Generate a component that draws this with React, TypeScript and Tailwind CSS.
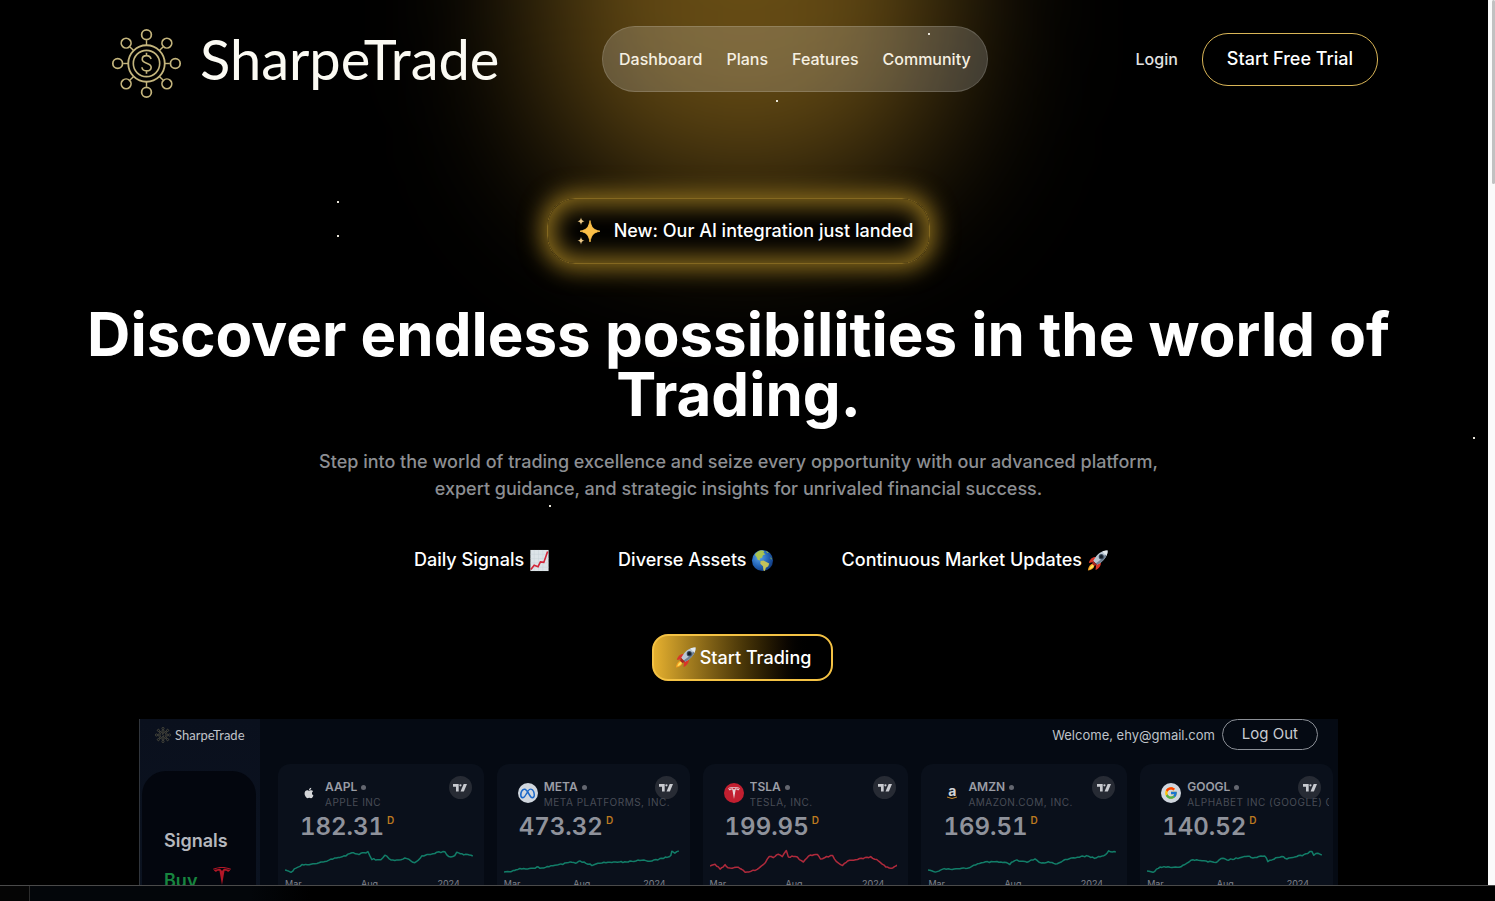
import type { ReactNode } from "react";
import { FaApple, FaMeta } from "react-icons/fa6";
import { FcGoogle } from "react-icons/fc";
import { SiTesla } from "react-icons/si";

type Point = [number, number];

interface Stock {
  ticker: string;
  company: string;
  price: string;
  icon: ReactNode;
  color: string;
  width: number;
  points: Point[];
}

function LogoMark({ className }: { className: string }) {
  const angles = [0, 45, 90, 135, 180, 225, 270, 315];
  return (
    <svg viewBox="0 0 70 70" className={className} fill="none" stroke="#c4b57d" aria-hidden="true">
      <circle cx="35" cy="35" r="18" strokeWidth="1.8" />
      <circle cx="35" cy="35" r="13" strokeWidth="1.6" />
      {angles.map((a) => (
        <g key={a} transform={`rotate(${a} 35 35)`}>
          <path d="M35 17v-5" strokeWidth="1.4" />
          <circle cx="35" cy="6.6" r="4.8" strokeWidth="1.7" />
        </g>
      ))}
      <path d="M39.500 30.500c-.6-2.200-2.200-3.300-4.400-3.300-2.500 0-4.300 1.400-4.300 3.500 0 5 8.800 2.900 8.800 8 0 2.200-1.800 3.600-4.500 3.600-2.500 0-4.300-1.300-4.600-3.600M35 24.500v2.700M35 42.300v2.700" strokeWidth="1.6" />
    </svg>
  );
}

function TradingViewMark({ className }: { className: string }) {
  return (
    <svg viewBox="0 0 16 10" className={className} fill="currentColor" aria-hidden="true">
      <path d="M0 1h6.500v8.500H3.400V4H0z" />
      <circle cx="8.500" cy="2.500" r="1.300" />
      <path d="M12.200 1H16l-3.600 8.500H8.600z" />
    </svg>
  );
}

function Rocket({ className }: { className: string }) {
  return (
    <svg viewBox="0 0 24 24" className={className} aria-hidden="true">
      <path d="M7 15.500C4 16 2.500 19 2 22.500 5.500 22 8.200 20.500 8.800 17.500z" fill="#f6a021" />
      <path d="M7.500 16.500c-2 .5-3.500 2.500-4 4.500 2.200-.5 4.200-1.500 4.700-3.500z" fill="#ffe25a" />
      <path d="M10.500 8.500C7 8 4 10.500 3 14.500l5-1zM15.500 13.500c.5 3.500-2 7-5.500 8.500l.5-5.500z" fill="#d8352a" />
      <path d="M22.500 1.500C16 1.500 11.500 5 7.500 12.500l4 4C18.500 12.500 22.500 8 22.500 1.500z" fill="#b9c6d3" />
      <path d="M22.500 1.500C22.500 8 18.500 12.500 11.500 16.500l-1.500-1.500C15.500 11.500 20 7 22.500 1.500z" fill="#6f8093" />
      <path d="M22.500 1.500c-2 0-4 .4-5.500 1.100L21.400 7c.8-1.600 1.100-3.500 1.100-5.500z" fill="#e4eaee" />
      <path d="M7.500 12.500l-1.200 2.800 2.400 2.400 2.800-1.200z" fill="#a82620" />
      <circle cx="16" cy="8" r="2.700" fill="#3a4a5c" />
      <circle cx="16" cy="8" r="1.700" fill="#141d28" />
    </svg>
  );
}

function Globe({ className }: { className: string }) {
  return (
    <svg viewBox="0 0 24 24" className={className} aria-hidden="true">
      <defs>
        <radialGradient id="sea" cx=".35" cy=".35" r=".7">
          <stop offset="0" stopColor="#5ba4ea" />
          <stop offset=".55" stopColor="#2669bd" />
          <stop offset="1" stopColor="#123c82" />
        </radialGradient>
      </defs>
      <circle cx="12" cy="12" r="11" fill="url(#sea)" />
      <path d="M4 6C5.500 3.500 8 1.800 10.500 1.300L14 2l-1 2 2 1.500-2.500 1-1 2.500-2.500 1 .5 2-2.500-.8L6 8.500z" fill="#a9c452" />
      <path d="M10 12.500l3-.5 3 1.500 3 1.500-1 3-2.500 1.500-1 3.500-1.500-.5-.5-4.500-2.800-2.500z" fill="#c4c25a" />
      <path d="M15.500 2l3 1.500-1.500 1zM20.500 8l1.500 3-1.500-.5z" fill="#8db34d" />
    </svg>
  );
}

function ChartEmoji({ className }: { className: string }) {
  return (
    <svg viewBox="0 0 22 24" className={className} aria-hidden="true">
      <rect x="2" y="1" width="19" height="22" fill="#dde4e8" />
      <path d="M2 5.500h19M2 10h19M2 14.500h19M2 19h19M6 1v22M10.500 1v22M15 1v22" stroke="#c9d3da" strokeWidth=".5" />
      <path d="M2.500 21.500L6 17l4 1.500 2.500-5 3.500.5L20 2.500" fill="none" stroke="#d22638" strokeWidth="1.700" />
    </svg>
  );
}

function Sparkles({ className }: { className: string }) {
  return (
    <svg viewBox="0 0 26 28" className={className} aria-hidden="true">
      <path d="M14 3.500c1.300 6.800 3 9.200 10 10.700-7 1.500-8.700 4-10 10.800-1.300-6.800-3-9.300-10-10.800 7-1.500 8.700-3.900 10-10.700z" fill="#fbbf48" stroke="#fbbf48" strokeWidth=".8" />
      <path d="M14 7.500c1 4.500 2.200 5.800 6.500 6.700-4.300 1-5.500 2.300-6.500 6.800-1-4.500-2.200-5.800-6.500-6.800 4.300-.9 5.500-2.200 6.500-6.700z" fill="#fbbf48" stroke="#fbbf48" strokeWidth="2" />
      <path d="M5 .5c.5 2.500 1 3.200 3.500 3.800C6 5 5.500 5.500 5 8c-.5-2.500-1-3-3.500-3.700C4 3.700 4.500 3 5 .5zM5 20c.5 2.500 1 3 3.500 3.600C6 24.200 5.500 25 5 27.500c-.5-2.500-1-3.300-3.500-3.900C4 23 4.500 22.500 5 20z" fill="#ecc987" />
    </svg>
  );
}

const stocks: Stock[] = [
  {
    ticker: "AAPL",
    company: "APPLE INC",
    price: "182.31",
    color: "#127d68",
    width: 188,
    icon: <FaApple className="size-3 text-[#d3d5d8]" />,
    points: [[0, 22], [6, 24], [11, 20], [17, 17], [26, 16], [34, 15], [44, 12], [57, 9], [67, 5], [74, 6], [83, 4], [87, 11], [96, 12], [100, 7], [106, 12], [114, 12], [122, 10], [130, 15], [137, 8], [146, 6], [154, 4], [160, 4], [164, 9], [170, 8], [172, 4], [179, 7], [183, 6], [188, 8]],
  },
  {
    ticker: "META",
    company: "META PLATFORMS, INC.",
    price: "473.32",
    color: "#127d68",
    width: 175,
    icon: (
      <span className="flex size-5 items-center justify-center rounded-full bg-[#d0d6de]">
        <FaMeta className="size-[15px] text-[#1b68c9]" />
      </span>
    ),
    points: [[0, 24], [9, 23], [14, 21], [31, 20], [33, 19], [36, 20], [49, 18], [63, 15], [68, 14], [73, 15], [76, 13], [88, 17], [96, 15], [108, 14], [119, 14], [128, 13], [136, 12], [146, 13], [156, 11], [167, 8], [168, 3], [171, 5], [175, 3]],
  },
  {
    ticker: "TSLA",
    company: "TESLA, INC.",
    price: "199.95",
    color: "#b02a3c",
    width: 187,
    icon: (
      <span className="flex size-5 items-center justify-center rounded-full bg-[#c21f30]">
        <SiTesla className="size-3 text-[#e6d5d8]" />
      </span>
    ),
    points: [[0, 18], [5, 16], [10, 21], [15, 17], [18, 20], [28, 19], [35, 24], [47, 22], [55, 15], [59, 8], [63, 10], [68, 6], [72, 8], [76, 3], [78, 9], [85, 8], [93, 14], [98, 8], [107, 6], [110, 11], [122, 7], [126, 14], [132, 17], [137, 13], [147, 11], [160, 9], [168, 13], [175, 19], [182, 20], [187, 17]],
  },
  {
    ticker: "AMZN",
    company: "AMAZON.COM, INC.",
    price: "169.51",
    color: "#127d68",
    width: 186,
    icon: (
      <span className="flex flex-col items-center text-sm leading-[10px] font-bold text-[#d3d5d8]">
        a
        <svg viewBox="0 0 10 4" className="h-1 w-2.5" fill="none" stroke="#c98a2c" aria-hidden="true">
          <path d="M0 1q5 3 10 0" />
        </svg>
      </span>
    ),
    points: [[0, 22], [9, 24], [14, 21], [24, 21], [39, 20], [47, 17], [57, 14], [74, 14], [81, 16], [86, 12], [98, 14], [106, 11], [112, 15], [121, 14], [128, 16], [134, 12], [148, 9], [157, 8], [165, 10], [176, 7], [179, 3], [186, 4]],
  },
  {
    ticker: "GOOGL",
    company: "ALPHABET INC (GOOGLE) C",
    price: "140.52",
    color: "#127d68",
    width: 175,
    icon: (
      <span className="flex size-5 items-center justify-center rounded-full bg-[#d0d6de]">
        <FcGoogle className="size-3.5" />
      </span>
    ),
    points: [[0, 23], [6, 24], [13, 19], [23, 19], [34, 19], [44, 12], [57, 13], [65, 14], [69, 15], [74, 10], [80, 12], [91, 10], [101, 8], [106, 10], [114, 8], [118, 8], [121, 13], [129, 10], [135, 8], [140, 11], [150, 8], [157, 7], [165, 3], [167, 7], [171, 5], [175, 7]],
  },
];

/* Adds small day-to-day movement between the key points of a series. */
function toPath(points: Point[]): string {
  const out: string[] = [];
  let seed = 7;
  for (let i = 0; i < points.length - 1; i++) {
    const [x0, y0] = points[i];
    const [x1, y1] = points[i + 1];
    const steps = Math.max(1, Math.round((x1 - x0) / 2));
    for (let s = 0; s < steps; s++) {
      seed = (seed * 73 + 41) % 997;
      const noise = (seed / 997 - 0.5) * 1.3;
      const t = s / steps;
      out.push(`${(x0 + (x1 - x0) * t).toFixed(1)} ${(y0 + (y1 - y0) * t + noise).toFixed(1)}`);
    }
  }
  const last = points[points.length - 1];
  out.push(`${last[0]} ${last[1]}`);
  return "M" + out.join("L");
}

function StockCard({ stock }: { stock: Stock }) {
  return (
    <article className="relative h-[180px] min-w-0 overflow-hidden rounded-xl bg-[#0a101b] pt-4">
      <span className="absolute top-3 right-3 flex size-[23px] items-center justify-center rounded-full bg-[#272b34]">
        <TradingViewMark className="h-[9px] w-3.5 text-[#c9cbd0]" />
      </span>
      <div className="relative flex gap-1.5 pl-[21px]">
        <div className="flex w-5 shrink-0 items-center justify-center pb-1">{stock.icon}</div>
        <div className="min-w-0 overflow-hidden pr-1 whitespace-nowrap">
          <h3 className="flex items-center gap-1 text-xs leading-[14px] font-semibold text-[#9a9da5]">
            {stock.ticker}
            <span className="size-[5px] rounded-full bg-[#63666f]" />
          </h3>
          <p className="overflow-hidden text-[10px] leading-4 tracking-wider text-[#484c56]">{stock.company}</p>
        </div>
      </div>
      <p className="flex items-start pl-[22px] text-2xl leading-[34px] font-semibold text-[#8f929b] tabular-nums">
        {stock.price}
        <sup className="top-0 ml-[3px] text-[10px] leading-[20px] font-semibold text-[#bd7a20]">D</sup>
      </p>
      <div className="pt-1 pr-[11px] pl-[7px]">
        <svg viewBox={`0 0 ${stock.width} 30`} preserveAspectRatio="none" className="h-[30px] w-full" aria-hidden="true">
          <path d={toPath(stock.points)} fill="none" stroke={stock.color} strokeWidth="1.5" strokeLinejoin="round" />
        </svg>
      </div>
      <div className="flex justify-between pt-px pr-6 pl-[7px] text-[9px] leading-[10px] text-[#80838b]">
        <span>Mar</span>
        <span>Aug</span>
        <span>2024</span>
      </div>
    </article>
  );
}

function DashboardPreview() {
  return (
    <section className="mx-auto mt-[38px] flex w-[1199px] max-w-[82%] border-l border-[#30353c] bg-[#050a13]">
      <aside className="w-[120px] shrink-0 bg-gradient-to-b from-[#0a101d] to-[#0c1422] pr-1 pl-0.5">
        <div className="flex h-[52px] items-start gap-1 pt-2 pl-[13px]">
          <LogoMark className="size-4 opacity-70" />
          <span className="font-['Lato',sans-serif] text-[13px] leading-4 text-[#c0c3c9]">SharpeTrade</span>
        </div>
        <div className="h-48 rounded-t-3xl bg-[#03060e] pt-[58px] pl-[22px]">
          <h2 className="text-lg leading-6 font-semibold text-[#b5b7bd]">Signals</h2>
          <div className="mt-3 flex items-start gap-4">
            <span className="text-lg leading-8 font-semibold text-[#17853f]">Buy</span>
            <SiTesla className="mt-0.5 size-[18px] text-[#b11727]" />
          </div>
        </div>
      </aside>
      <div className="min-w-0 flex-1">
        <div className="flex h-[45px] items-start justify-end gap-[7px] pr-5">
          <span className="text-[13px] leading-8 text-[#bfc3c9]">Welcome, ehy@gmail.com</span>
          <button type="button" className="h-[31px] rounded-full border border-[#8b8f96] px-[19px] text-[15px] text-[#c9ccd1]">
            Log Out
          </button>
        </div>
        <div className="grid grid-cols-[206fr_193fr_206fr_206fr_193fr] gap-[13px] pr-[5px] pl-[18px]">
          {stocks.map((s) => (
            <StockCard key={s.ticker} stock={s} />
          ))}
        </div>
      </div>
    </section>
  );
}

const stars = [
  "top-[33px] left-[928px]",
  "top-[100px] left-[776px]",
  "top-[201px] left-[337px]",
  "top-[235px] left-[337px]",
  "top-[437px] left-[1473px]",
  "top-[505px] left-[549px]",
];

export default function App() {
  return (
    <div className="flex h-screen flex-col overflow-hidden bg-black font-['Inter',sans-serif] text-white">
      <div className="flex min-h-0 flex-1">
        <div className="relative isolate min-w-0 flex-1 overflow-hidden">
          <div className="absolute -top-64 left-1/2 -z-10 h-[450px] w-[400px] -translate-x-1/2 rounded-[140px] bg-[#654b14] blur-[80px]" aria-hidden="true" />
          {stars.map((pos) => (
            <span key={pos} className={`absolute z-10 size-0.5 bg-[#e8e4d8] ${pos}`} />
          ))}
          <header className="flex h-[92px] items-center pt-[26px] pr-[110px] pl-[111px]">
            <a href="#home" className="flex w-[387px] shrink-0 items-center gap-[18px]">
              <LogoMark className="mt-2 size-[71px] shrink-0" />
              <span className="font-['Lato',sans-serif] text-[56px] leading-[64px] text-[#fbfaf3]">SharpeTrade</span>
            </a>
            <nav className="ml-[104px] flex h-[66px] items-center gap-6 rounded-full border border-white/15 bg-white/18 px-4 text-base font-medium text-[#f6f0e2]">
              <a href="#dashboard">Dashboard</a>
              <a href="#plans">Plans</a>
              <a href="#features">Features</a>
              <a href="#community">Community</a>
            </nav>
            <div className="ml-auto flex items-center gap-6">
              <a href="#login" className="text-base font-medium text-[#e2e2e2]">Login</a>
              <button type="button" className="h-[53px] rounded-[26px] border border-[#d9b557] px-6 text-lg font-medium">
                Start Free Trial
              </button>
            </div>
          </header>

          <main className="pr-[11px]">
            <div className="mx-auto mt-[106px] flex h-[66px] w-fit items-center gap-3 rounded-[28px] border border-[#846820] bg-black/90 pr-4 pl-7 text-lg font-medium shadow-[0_0_22px_6px_rgba(140,110,30,0.95),inset_0_0_22px_7px_rgba(140,110,30,0.95)]">
              <Sparkles className="h-7 w-[26px]" />
              New: Our AI integration just landed
            </div>
            <h1 className="mt-[40px] px-20 text-center text-[60px] leading-[60px] font-bold">
              Discover endless possibilities in the world of Trading.
            </h1>
            <p className="mx-auto mt-6 max-w-[860px] text-center text-lg leading-[27px] font-medium text-[#8c8e92]">
              Step into the world of trading excellence and seize every opportunity with our advanced platform, expert guidance, and strategic insights for unrivaled financial success.
            </p>
            <ul className="mt-11 flex justify-center gap-[68px] pl-[46px] text-lg leading-7 font-medium">
              <li className="flex items-center gap-1">
                Daily Signals <ChartEmoji className="h-[23px] w-[22px]" />
              </li>
              <li className="flex items-center gap-1">
                Diverse Assets <Globe className="size-[23px]" />
              </li>
              <li className="flex items-center gap-1">
                Continuous Market Updates <Rocket className="size-[23px]" />
              </li>
            </ul>
            <div className="mt-[60px] flex justify-center pl-2">
              <button type="button" className="flex h-[47px] items-center gap-[3px] rounded-2xl border-2 border-[#f4c244] bg-gradient-to-r from-[#e5b02f] to-black to-90% px-5 text-lg font-medium">
                <Rocket className="size-[23px]" />
                Start Trading
              </button>
            </div>
            <DashboardPreview />
          </main>
        </div>
        <div className="w-[7px] shrink-0 bg-[#fafafa] pl-1" aria-hidden="true">
          <div className="h-[184px] rounded-full bg-[#c1c1c1]" />
        </div>
      </div>
      <footer className="flex h-4 shrink-0 border-t border-[#4a4a4a] bg-[#050505]">
        <div className="ml-[29px] flex-1 border-l border-[#2c2c2c] bg-[linear-gradient(to_right,#03060a,#03060a_220px,#000_280px)]" />
      </footer>
    </div>
  );
}
